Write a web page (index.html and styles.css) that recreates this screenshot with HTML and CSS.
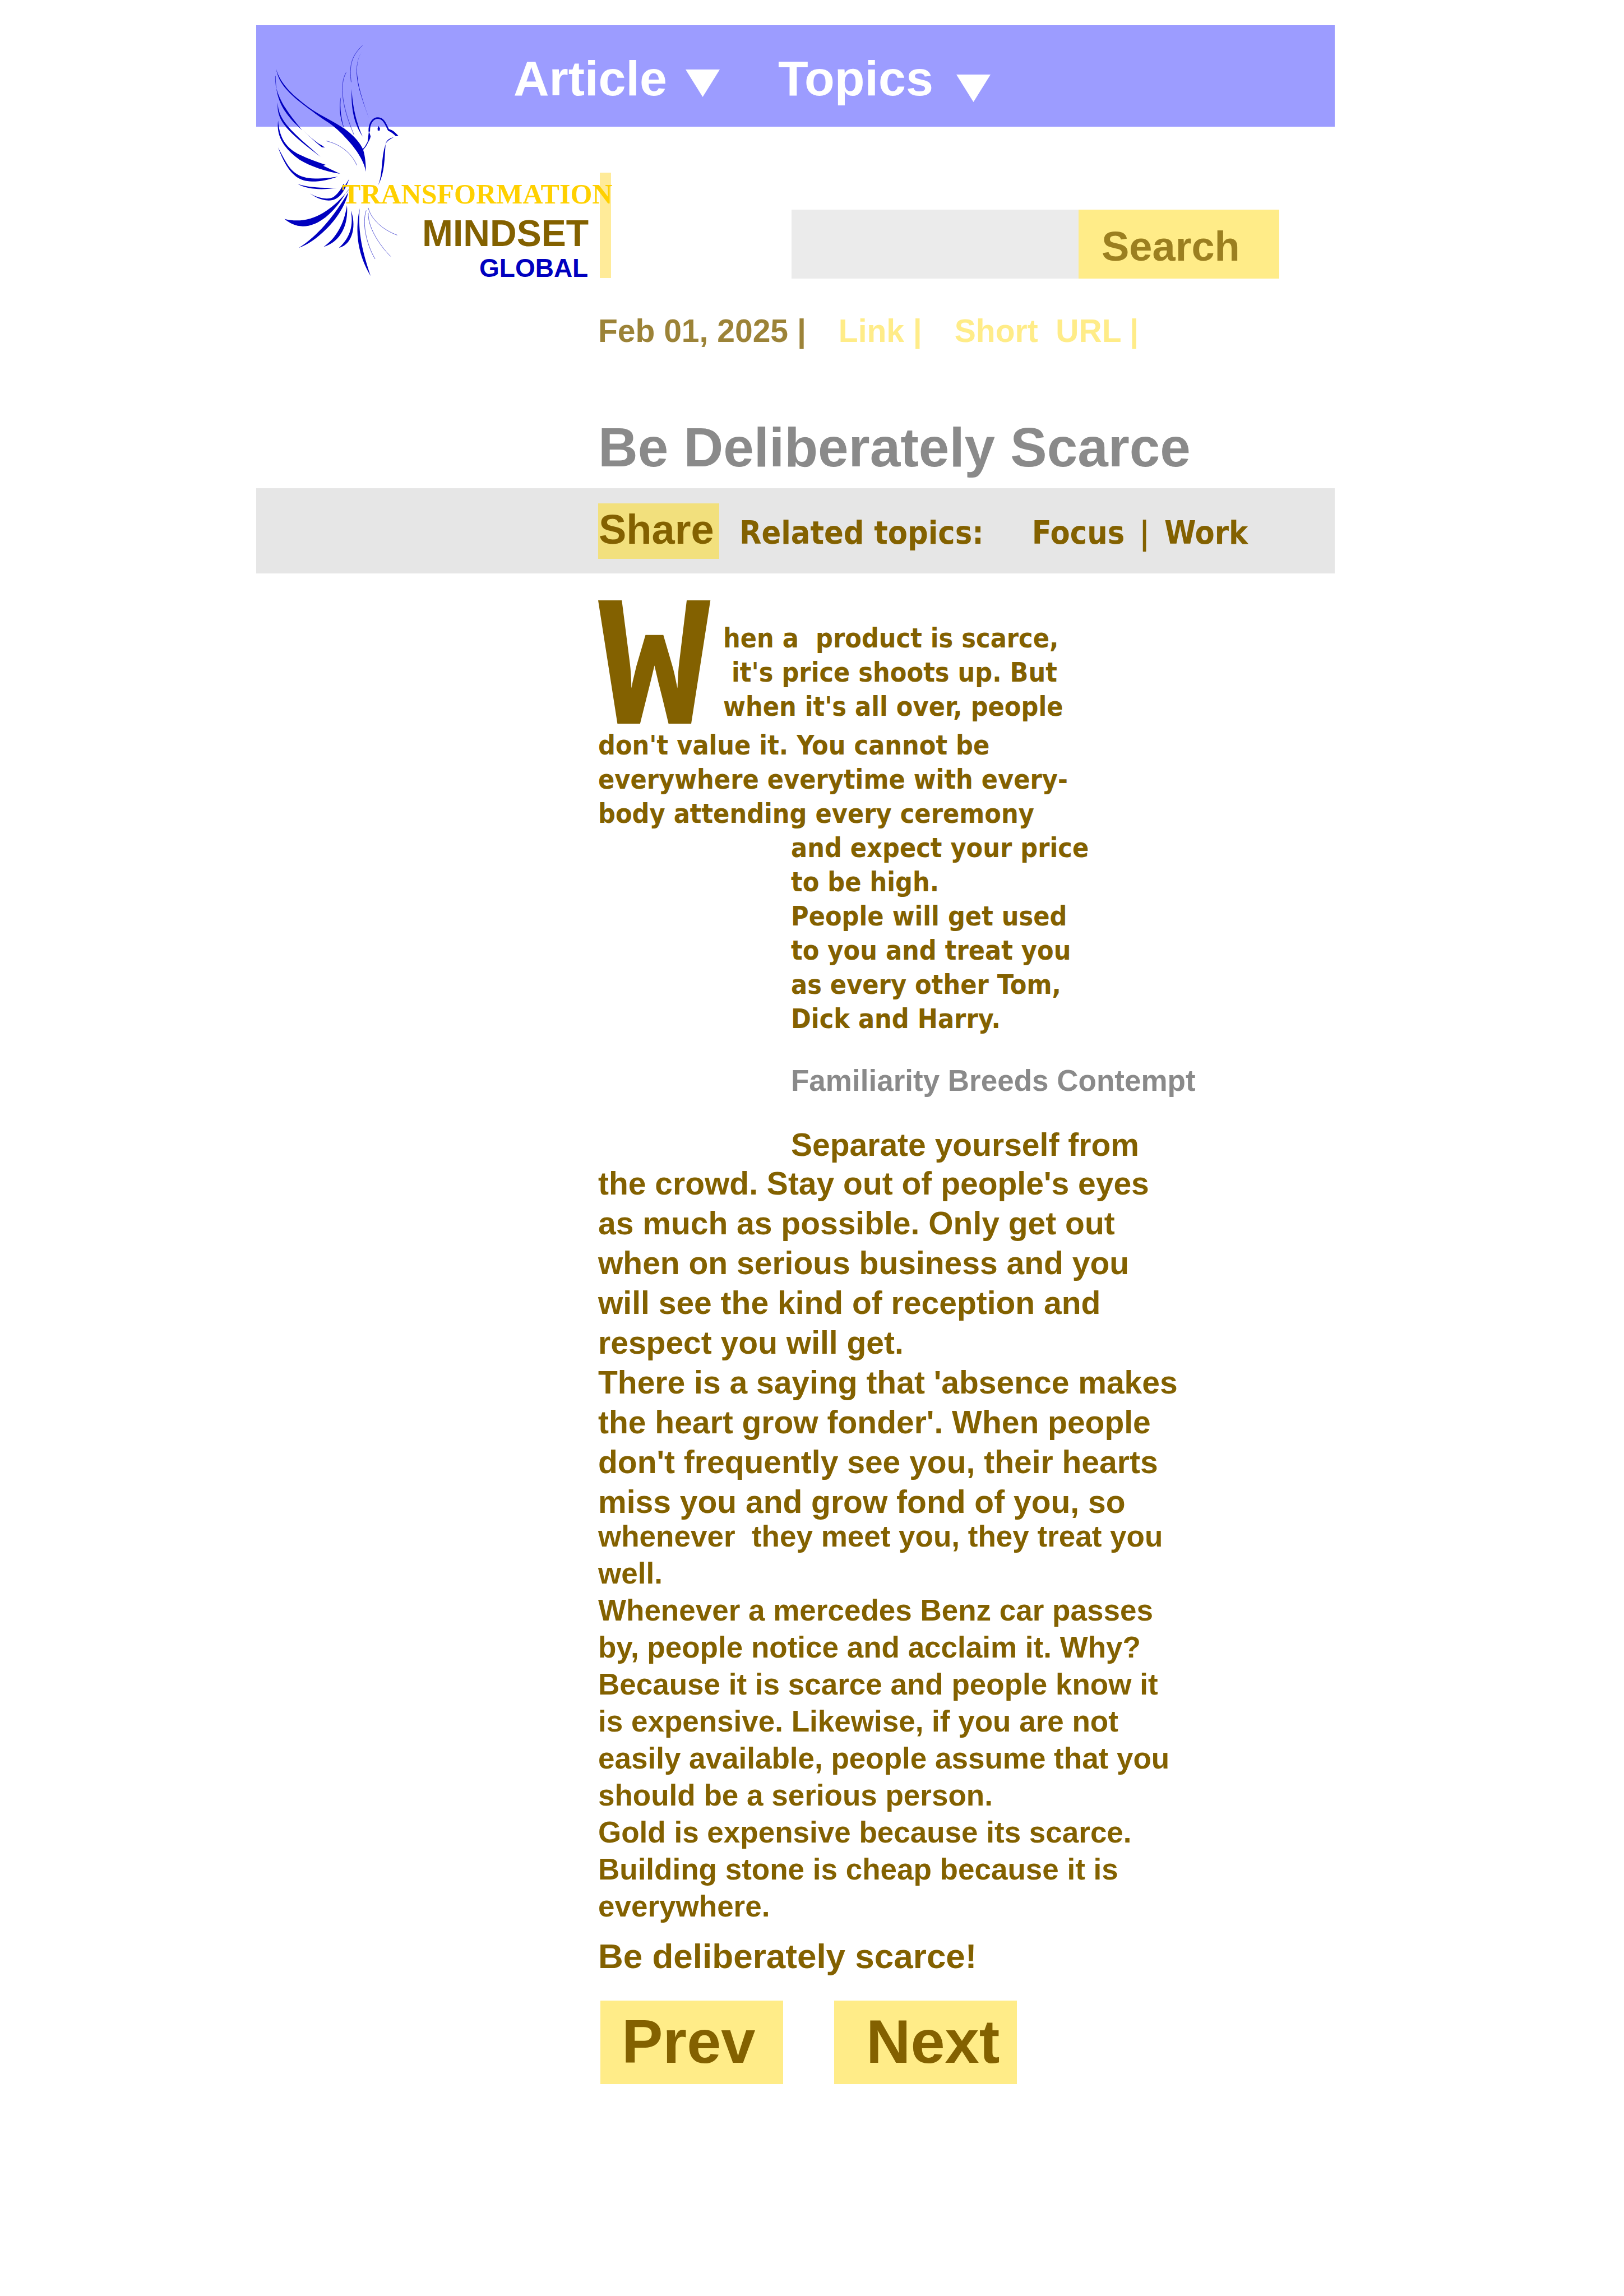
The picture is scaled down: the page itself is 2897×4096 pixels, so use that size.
FILE: index.html
```html
<!DOCTYPE html>
<html lang="en">
<head>
<meta charset="utf-8">
<title>Be Deliberately Scarce</title>
<meta name="viewport" content="width=device-width, initial-scale=1">
<link rel="stylesheet" href="styles.css">
</head>
<body>
<div class="page">
  <header class="header">
    <a class="logo" href="#" aria-label="Transformation Mindset Global">
      <svg class="logo-art" viewBox="0 0 624 448">
        <g class="dove" transform="scale(.3038)">
          <path d="M62 195C75 285 150 355 270 440C290 455 320 478 370 510C420 545 460 585 510 645C545 690 575 735 589 798C587 750 585 710 572 668C550 620 510 580 462 545C410 508 330 472 270 432C170 360 85 285 62 195Z"/>
          <path d="M62 305C80 370 110 430 215 555C120 470 75 400 62 305Z"/>
          <path d="M215 550Q270 605 310 632Q330 642 348 656L330 654Q285 620 215 550Z"/>
          <path d="M71 392C72 495 150 560 322 710C135 570 60 500 71 392Z"/>
          <path d="M73 498C80 600 120 660 200 698C250 722 300 740 352 757L338 763L437 810C350 795 260 765 200 728C110 665 60 590 73 498Z"/>
          <path d="M72 655C130 760 150 835 290 838C340 838 390 832 425 826C370 845 330 855 272 855C170 855 120 780 72 655Z"/>
          <path d="M187 870C250 890 330 895 418 892C340 905 250 905 187 870Z"/>
          <path d="M258 925C310 955 370 965 400 945C430 920 445 895 457 868L462 885L490 840C460 920 430 965 370 967C320 965 290 945 258 925Z"/>
          <path d="M110 1075C250 1110 370 1040 470 923C400 1040 310 1118 218 1118C175 1118 140 1100 110 1075Z"/>
          <path d="M193 1245C300 1180 400 1060 485 918C470 990 420 1070 360 1130C300 1190 250 1225 193 1245Z"/>
          <path d="M340 1239C410 1190 460 1110 477 995C487 1110 440 1210 340 1239Z"/>
          <path d="M430 1245C500 1180 515 1110 500 1025C530 1100 520 1220 430 1245Z"/>
          <path d="M552 1012C520 1160 545 1290 616 1410C570 1270 540 1160 552 1012Z"/>
          <path d="M567 87C505 180 545 310 606 483C555 340 495 195 567 87Z"/>
          <path d="M505 312C510 430 540 530 570 592C520 520 500 430 505 312Z"/>
          <path d="M442 358C432 420 445 500 464 552C440 500 425 420 442 358Z"/>
          <path d="M704 635C675 720 690 800 661 876C700 800 697 720 704 635Z"/>
          <path d="M661 528L671 542L669 556L658 556L657 545Z"/>
          <path d="M606 558L616 590Q612 612 597 630Q602 590 606 558Z"/>
          <path d="M714 545Q745 552 760 568L779 587L764 589Q740 565 718 556Z"/>
          <path d="M752 595Q712 603 703 635Q716 612 752 595Z"/>
          <g class="dove-line">
            <path class="bold" d="M608 562C606 505 636 482 660 483C695 485 705 522 720 550"/>
            <path class="medium" d="M599 625Q588 650 570 668"/>
            <path d="M57 235Q56 270 62 305"/>
            <path d="M568 57C500 120 490 180 502 272"/>
            <path d="M472 215C430 290 450 420 518 580"/>
            <path d="M356 617C430 635 500 680 535 760"/>
            <path d="M470 923L492 898"/>
            <path d="M590 1025C565 1100 590 1220 642 1310"/>
            <path d="M602 1040C600 1120 660 1220 733 1295"/>
            <path d="M602 1010C620 1080 690 1140 772 1170"/>
          </g>
        </g>
        <rect class="logo-bar" x="596" y="244" width="20" height="188"/>
        <text class="logo-top" x="136" y="299">TRANSFORMATION</text>
        <text class="logo-mid" x="279" y="375">MINDSET</text>
        <text class="logo-low" x="381" y="430">GLOBAL</text>
      </svg>
    </a>
    <nav class="nav">
      <button class="nav-item" type="button">Article
        <svg class="caret" viewBox="0 0 61 49"><path d="M0 0H61L30.500 49Z"/></svg>
      </button>
      <button class="nav-item nav-topics" type="button">Topics
        <svg class="caret" viewBox="0 0 61 49"><path d="M0 0H61L30.500 49Z"/></svg>
      </button>
    </nav>
  </header>

  <form class="search" role="search">
    <input class="search-box" type="search" aria-label="Search articles">
    <button class="search-button" type="button">Search</button>
  </form>

  <main>
    <div class="column">
      <div class="meta">
        <span class="date">Feb 01, 2025 |</span>
        <a href="#">Link |</a>
        <a href="#">Short&nbsp; URL |</a>
      </div>
      <h1>Be Deliberately Scarce</h1>
    </div>

    <div class="topics-bar">
      <button class="share" type="button">Share</button>
      <span class="related">Related topics:</span>
      <span class="topic-links"><a href="#">Focus</a><span>|</span><a href="#">Work</a></span>
    </div>

    <article class="column">
      <div class="opening">
        <span class="drop-cap">W</span>
        <p class="intro">hen a&nbsp; product is scarce,<br>&nbsp;it's price shoots up. But<br>when it's all over, people</p>
      </div>
      <p class="intro">don't value it. You cannot be<br>everywhere everytime with every-<br>body attending every ceremony</p>
      <p class="intro inset">and expect your price<br>to be high.<br>People will get used<br>to you and treat you<br>as every other Tom,<br>Dick and Harry.</p>
      <h2 class="inset">Familiarity Breeds Contempt</h2>
      <p class="body first inset">Separate yourself from</p>
      <p class="body">the crowd. Stay out of people's eyes<br>as much as possible. Only get out<br>when on serious business and you<br>will see the kind of reception and<br>respect you will get.<br>There is a saying that 'absence makes<br>the heart grow fonder'. When people<br>don't frequently see you, their hearts<br>miss you and grow fond of you, so</p>
      <p class="body small">whenever&nbsp; they meet you, they treat you<br>well.<br>Whenever a mercedes Benz car passes<br>by, people notice and acclaim it. Why?<br>Because it is scarce and people know it<br>is expensive. Likewise, if you are not<br>easily available, people assume that you<br>should be a serious person.<br>Gold is expensive because its scarce.<br>Building stone is cheap because it is<br>everywhere.</p>
      <p class="closing">Be deliberately scarce!</p>
      <div class="pager">
        <button class="prev" type="button">Prev</button>
        <button class="next" type="button">Next</button>
      </div>
    </article>
  </main>
</div>
</body>
</html>
```
FILE: styles.css
```css
* {
  box-sizing: border-box;
}

body {
  margin: 0;
  background: #fff;
  color: #836100;
  font-family: "Liberation Sans", Arial, sans-serif;
  font-weight: bold;
}

h1, h2, p {
  margin: 0;
}

a {
  color: inherit;
  text-decoration: none;
}

button {
  border: 0;
  padding: 0;
  color: inherit;
  font: inherit;
  text-align: left;
}

.page {
  padding: 45px 516px 100px 457px;
}

/* Header */
.header {
  position: relative;
  height: 181px;
  padding: 44px 0 0 459px;
  background: #9c9cff;
}

.nav {
  display: flex;
  gap: 104px;
}

.nav-item {
  display: flex;
  align-items: center;
  gap: 33px;
  background: none;
  color: #fff;
  font-size: 88px;
  line-height: 101px;
}

.caret {
  width: 61px;
  height: 49px;
  margin-top: 18px;
  fill: #fff;
}

.nav-topics {
  gap: 41px;
}

.nav-topics .caret {
  margin-top: 36px;
}

/* The logo hangs over the lower edge of the header */
.logo {
  position: absolute;
  top: 19px;
  left: 17px;
}

.logo-art {
  display: block;
  width: 624px;
  height: 448px;
}

.dove {
  fill: #0000bf;
}

.dove-line {
  fill: none;
  stroke: #0000bf;
  stroke-width: 2;
}

.dove-line .bold {
  stroke-width: 9;
}

.dove-line .medium {
  stroke-width: 5;
}

.logo-bar {
  fill: #ffeb99;
}

.logo-top {
  fill: #ffd000;
  font: bold 50px "Liberation Serif", "Times New Roman", serif;
}

.logo-mid {
  fill: #836100;
  font-size: 66px;
}

.logo-low {
  fill: #0000bf;
  font-size: 46px;
}

/* Search */
.search {
  display: flex;
  height: 123px;
  margin-top: 148px;
  padding: 0 99px 0 955px;
}

.search-box {
  flex: 1;
  min-width: 0;
  border: 0;
  padding: 0 24px;
  background: #ebebeb;
  font: inherit;
  font-size: 57px;
}

.search-button {
  width: 358px;
  padding: 7px 0 0 41px;
  background: #ffec88;
  color: #9b7f20;
  font-size: 74px;
}

/* Article heading */
.column {
  padding-left: 610px;
}

.meta {
  display: flex;
  gap: 58px;
  margin-top: 60px;
  color: #ffec88;
  font-size: 57px;
  line-height: 66px;
}

.date {
  color: #9c8338;
}

h1 {
  margin-top: 119px;
  color: #8a8a8a;
  font-size: 98px;
  line-height: 112px;
}

.topics-bar {
  display: flex;
  align-items: center;
  height: 152px;
  margin-top: 17px;
  padding-left: 610px;
  background: #e6e6e6;
  font-family: "DejaVu Sans Condensed", "Noto Sans", sans-serif;
  font-size: 57px;
}

.share {
  width: 216px;
  height: 99px;
  padding: 0 0 6px 1px;
  background: #f2e07d;
  font-family: "Liberation Sans", Arial, sans-serif;
  font-size: 74px;
}

.related {
  margin-left: 36px;
  padding-top: 6px;
}

.topic-links {
  display: flex;
  gap: 26px;
  margin-left: 86px;
  padding-top: 6px;
}

/* Article text */
.opening {
  display: flex;
  align-items: flex-end;
  margin: 85px 0 8px;
}

.drop-cap {
  width: 223px;
  font-family: "Liberation Mono", monospace;
  font-size: 334px;
  line-height: 178px;
}

.intro {
  font-family: "DejaVu Sans Condensed", "Noto Sans", sans-serif;
  font-size: 48px;
  line-height: 61px;
}

.inset {
  margin-left: 344px;
}

h2 {
  margin-top: 44px;
  color: #8a8a8a;
  font-size: 53px;
  line-height: 72px;
}

.body {
  font-size: 57px;
  line-height: 71px;
}

.body.first {
  margin-top: 44px;
  line-height: 68px;
}

.body.small {
  margin-top: -7px;
  font-size: 53px;
  line-height: 66px;
}

.closing {
  margin-top: 20px;
  font-size: 62px;
  line-height: 72px;
}

.pager {
  display: flex;
  gap: 91px;
  margin: 43px 0 0 4px;
}

.pager button {
  width: 326px;
  height: 149px;
  padding-bottom: 4px;
  background: #ffec88;
  font-size: 110px;
}

.pager .prev {
  padding-left: 38px;
}

.pager .next {
  padding-left: 57px;
}
```
